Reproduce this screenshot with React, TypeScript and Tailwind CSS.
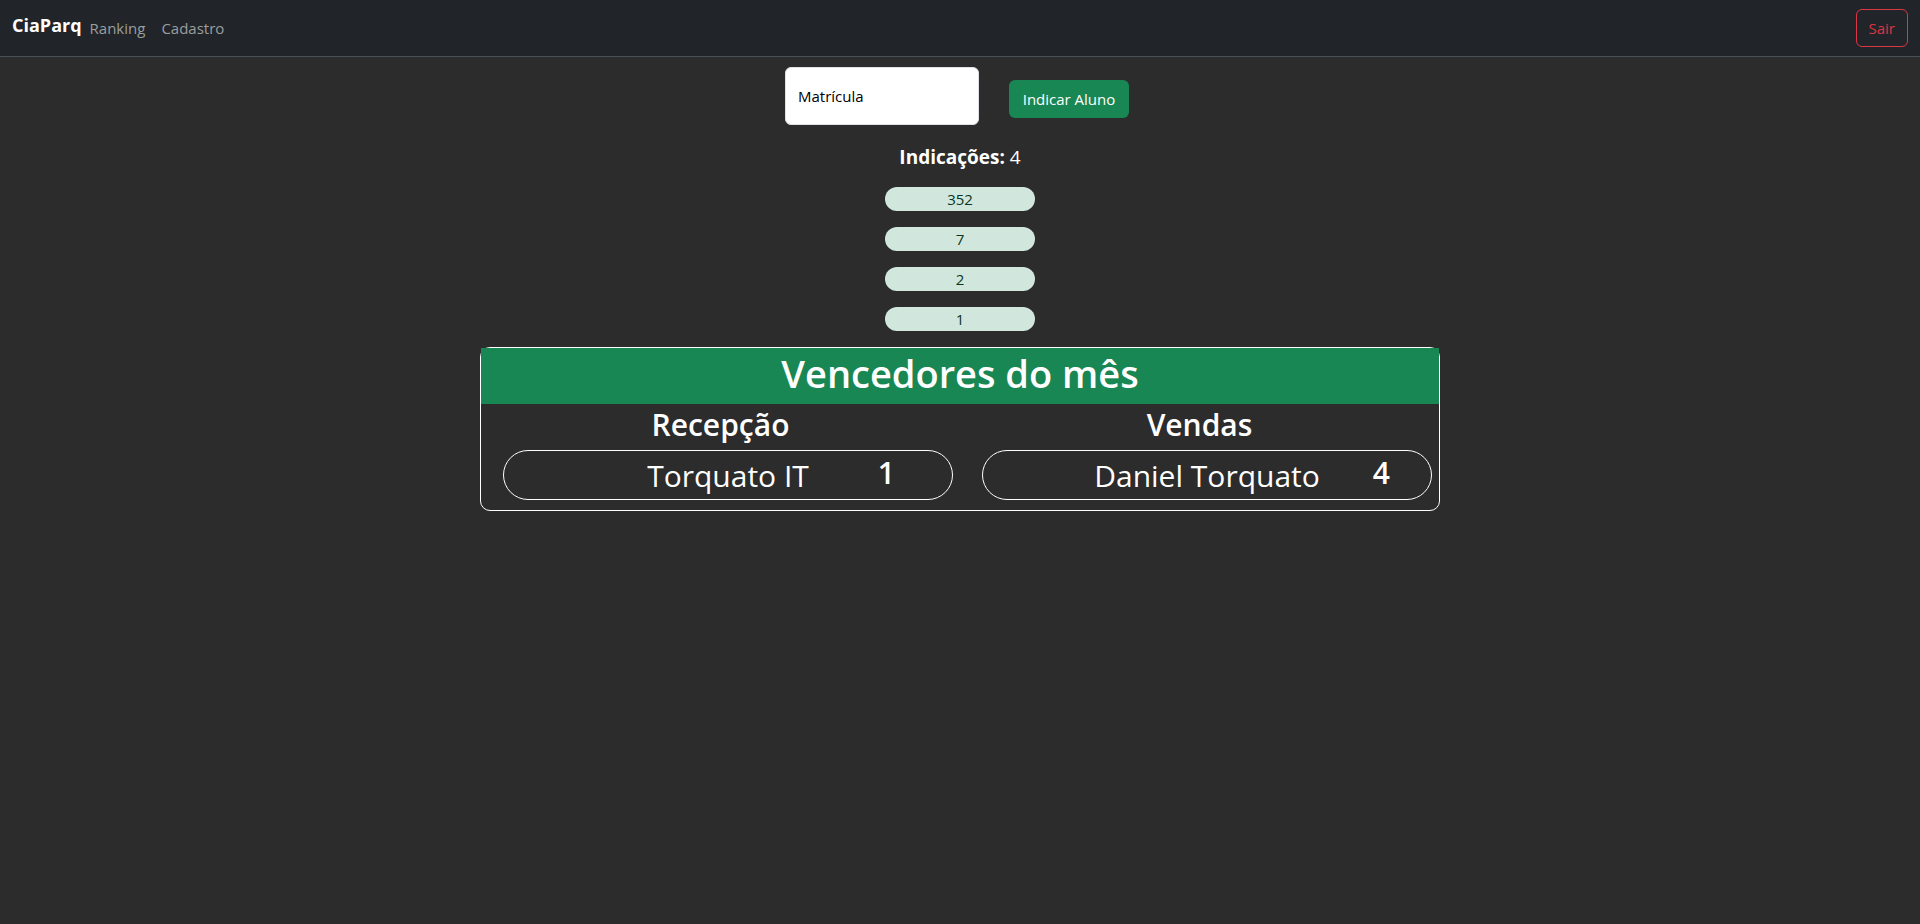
const indications = [352, 7, 2, 1];

const winners = [
  { team: "Recepção", name: "Torquato IT", total: 1 },
  { team: "Vendas", name: "Daniel Torquato", total: 4 },
];

function Navbar() {
  return (
    <nav className="flex h-[57px] items-center border-b border-[#495057] bg-[#212529] px-3">
      <a href="#" className="mb-1.5 text-[18px] leading-7 font-bold text-white">
        CiaParq
      </a>
      <a href="#ranking" className="px-2 text-[#9b9d9e]">
        Ranking
      </a>
      <a href="#cadastro" className="px-2 text-[#9b9d9e]">
        Cadastro
      </a>
      <button
        type="button"
        className="ml-auto h-[38px] rounded-md border border-[#dc3545] px-3 text-[#dc3545]"
      >
        Sair
      </button>
    </nav>
  );
}

function IndicationForm() {
  return (
    <form className="flex items-center justify-center pt-[10px] pr-[6px]">
      <input
        type="text"
        aria-label="Matrícula"
        placeholder="Matrícula"
        className="h-[58px] w-[194px] rounded-md border border-[#dee2e6] bg-white px-3 text-[#212529] outline-none placeholder:text-black placeholder:opacity-100"
      />
      <button
        type="button"
        className="mt-[6px] ml-[30px] h-[38px] w-[120px] rounded-md bg-[#198754] text-white"
      >
        Indicar Aluno
      </button>
    </form>
  );
}

function Winners() {
  return (
    <section className="mx-auto mt-4 w-1/2 rounded-[10px] border border-white pb-[10px]">
      <h1 className="h-14 bg-[#198754] text-center text-[38px] leading-[50px] font-semibold">
        Vencedores do mês
      </h1>
      <div className="grid grid-cols-2">
        {winners.map((winner) => (
          <div key={winner.team}>
            <h2 className="h-[46px] text-center text-[30px] leading-[42px] font-semibold">
              {winner.team}
            </h2>
            <div className="mr-[7px] ml-[22px] grid h-[50px] grid-cols-[1fr_auto_1fr] rounded-full border border-white">
              <span className="col-start-2 text-[30px] leading-[50px]">{winner.name}</span>
              <strong className="pl-3 text-center text-[30px] leading-[44px] font-semibold">
                {winner.total}
              </strong>
            </div>
          </div>
        ))}
      </div>
    </section>
  );
}

export default function App() {
  return (
    <div className="min-h-screen bg-[#2c2c2c] font-['Open_Sans','Noto_Sans',sans-serif] text-[15px] leading-6 text-white">
      <Navbar />
      <main>
        <IndicationForm />
        <p className="mt-4 text-center text-[19px] leading-8">
          <strong className="font-bold">Indicações:</strong> {indications.length}
        </p>
        <ul className="mt-[14px] flex flex-col items-center gap-4">
          {indications.map((code) => (
            <li
              key={code}
              className="h-6 w-[150px] rounded-full bg-[#d1e7dd] text-center text-[#0a3622]"
            >
              {code}
            </li>
          ))}
        </ul>
        <Winners />
      </main>
    </div>
  );
}
